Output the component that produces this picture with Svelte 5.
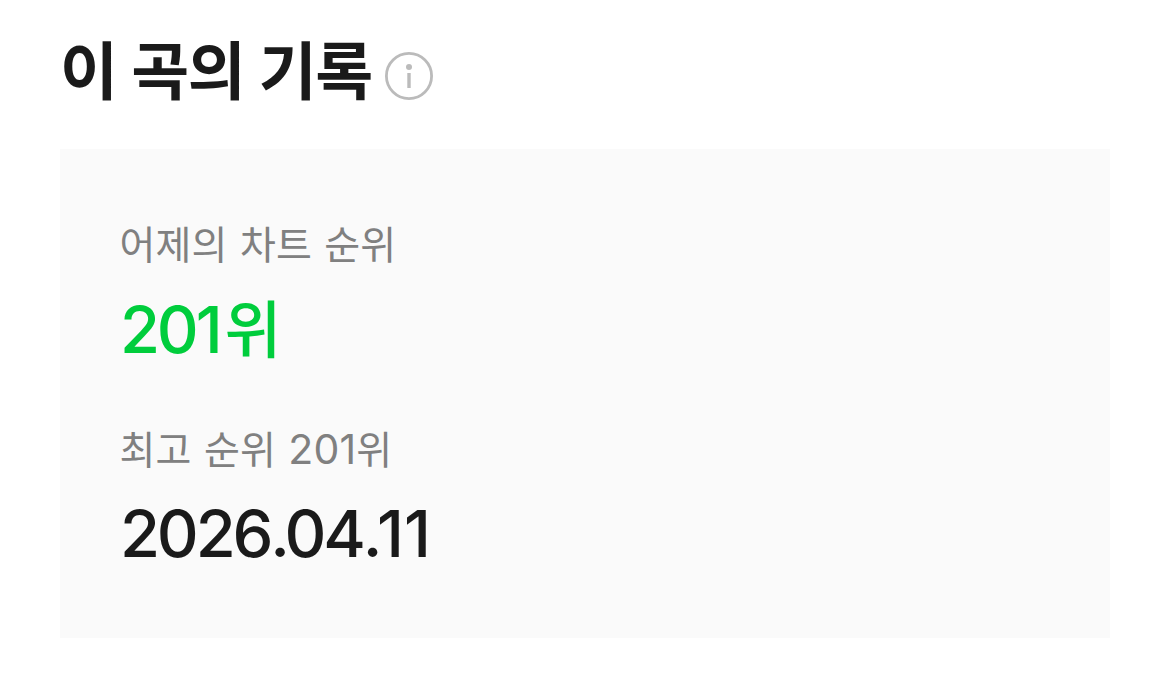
<script>
    const records = [
        { label: "어제의 차트 순위", number: "201", unit: "위", highlight: true },
        { label: "최고 순위", rank: "201", number: "2026.04.11" },
    ];
</script>

<section class="record">
    <header class="record-header">
        <h2>이 곡의 기록</h2>
        <button class="info" aria-label="안내">
            <svg width="48" height="48" viewBox="0 0 48 48" fill="none">
                <circle cx="24" cy="24" r="22.6" stroke="#bbb" stroke-width="2.8" />
                <circle cx="24" cy="15" r="3" fill="#bbb" />
                <path d="M24 21v15" stroke="#bbb" stroke-width="3.4" />
            </svg>
        </button>
    </header>

    <dl class="record-box">
        {#each records as item}
        <div class="record-item">
            <dt>{item.label}{#if item.rank}&nbsp;<span class="rank">{item.rank}</span>위{/if}</dt>
            <dd class:highlight={item.highlight}>{#each item.number as char}<span class:narrow={char === "1"} class:dot={char === "."}>{char}</span>{/each}{#if item.unit}<span class="unit">{item.unit}</span>{/if}</dd>
        </div>
        {/each}
    </dl>
</section>

<style>
    :global(body) {
        background-color: #fff;
    }
    .record {
        box-sizing: border-box;
        height: 676px;
        padding: 30px 60px 38px;
        font-family: Inter, "Noto Sans CJK KR", sans-serif;
        color: #1a1a1a;
    }
    .record-header {
        display: flex;
        align-items: center;
        height: 90px;
    }
    h2 {
        margin: -8px 0 0;
        font-size: 63px;
        font-weight: 700;
        line-height: 84px;
        letter-spacing: -1.5px;
        word-spacing: 1.3px;
        white-space: nowrap;
    }
    .info {
        display: flex;
        margin: 2px 0 0 13px;
        padding: 0;
        border: none;
        background: none;
    }
    .record-box {
        display: flex;
        flex-direction: column;
        gap: 48px;
        box-sizing: border-box;
        height: 489px;
        margin: 29px 0 0;
        padding: 66px 60px 60px;
        background-color: #fafafa;
    }
    dt {
        height: 60px;
        margin-left: -.5px;
        line-height: 60px;
        font-size: 39px;
        letter-spacing: .15px;
        word-spacing: 1.2px;
        color: #808080;
    }
    .rank {
        font-size: 41px;
    }
    dd {
        height: 83px;
        margin: 0;
        padding-top: 13px;
        line-height: 84px;
        font-size: 65px;
        font-weight: 500;
        letter-spacing: -3.2px;
        font-kerning: none;
    }
    .highlight {
        color: #00cd3c;
    }
    .narrow {
        letter-spacing: 0;
    }
    .dot {
        letter-spacing: -5.5px;
    }
    .unit {
        margin-left: 2px;
        font-size: 62px;
    }
</style>
